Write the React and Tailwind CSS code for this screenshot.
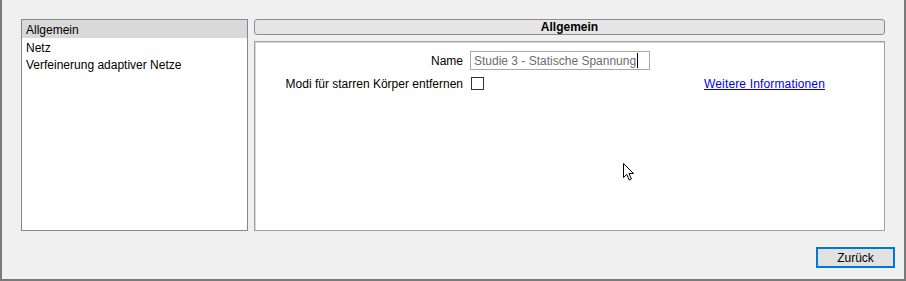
import React from 'react';

const font = { fontFamily: '"Liberation Sans", Arial, sans-serif' };

const navItems = ['Allgemein', 'Netz', 'Verfeinerung adaptiver Netze'];

function Cursor() {
  return (
    <svg
      className="absolute left-[620px] top-[162px]"
      width="14"
      height="20"
      viewBox="0 0 14 20"
    >
      <path
        d="M1.5 1.5 L1.5 15.5 L4.8 12.4 L7.2 18 L9.4 17 L7 11.5 L11.5 11.5 Z"
        fill="#ffffff"
        stroke="#000000"
        strokeWidth="1"
        strokeLinejoin="miter"
      />
    </svg>
  );
}

export default function App() {
  return (
    <div
      className="relative w-[906px] h-[281px] bg-[#f0f0f0] text-[12px] text-black border-l-2 border-r-2 border-b-2 border-[#7a7a7a] overflow-hidden"
      style={font}
    >
      <div className="flex gap-[6px] pl-[19px] pt-[19px]">
        {/* left navigation list */}
        <div className="w-[227px] h-[212px] bg-white border border-[#828790]">
          {navItems.map((item, i) => (
            <div
              key={item}
              className={`pl-[4px] leading-[20px] overflow-visible ${i === 0 ? 'h-[18px] bg-[#d9d9d9]' : 'h-[17px]'}`}
            >
              {item}
            </div>
          ))}
        </div>

        {/* right settings panel */}
        <div className="w-[631px] flex flex-col gap-[6px]">
          <div className="h-[16px] rounded-[3px] border border-[#8c8c8c] bg-[#e5e5e5] flex items-center justify-center font-bold leading-none">
            Allgemein
          </div>
          <div className="h-[190px] bg-white border border-[#a0a0a0] shadow-[inset_1px_1px_0_#d8d8d8] pt-[9px]">
            <div className="flex items-center h-[19px]">
              <div className="w-[208px] text-right">Name</div>
              <div className="ml-[7px] w-[180px] h-[19px] border border-[#a9a9a9] flex items-center pl-[3px] text-[#6d6d6d]">
                <span>Studie 3 - Statische Spannung</span>
                <span className="ml-[1px] w-[1px] h-[15px] bg-black" />
              </div>
            </div>
            <div className="flex items-center h-[13px] mt-[7px]">
              <div className="w-[208px] text-right">Modi für starren Körper entfernen</div>
              <div className="ml-[8px] w-[13px] h-[13px] border border-[#333333] bg-white" />
              <a className="ml-[220px] text-[#0000ee] underline cursor-pointer tracking-[0.15px]">Weitere Informationen</a>
            </div>
          </div>
        </div>
      </div>

      <div className="flex justify-end pr-[9px] mt-[16px]">
        <button className="w-[79px] h-[21px] border-2 border-[#0078d7] bg-[#e1e1e1] text-[12px] leading-none" style={font}>
          Zurück
        </button>
      </div>

      <Cursor />
    </div>
  );
}
